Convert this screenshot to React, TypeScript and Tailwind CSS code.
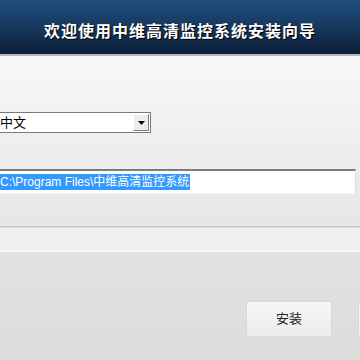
export default function App() {
  const cjk = { fontFamily: '"Liberation Sans", "Noto Sans CJK SC", sans-serif' }
  return (
    <div className="w-[360px] h-[360px] overflow-hidden flex flex-col bg-[#e4e4e4]" style={cjk}>
      {/* Header */}
      <div className="h-[54px] shrink-0 flex items-center justify-center bg-gradient-to-b from-[#1f4d7e] via-[#17385f] to-[#0b1f36]">
        <h1 className="text-[16px] font-bold text-white tracking-[1px] pt-[10px] [text-shadow:1px_1px_1px_#000]">
          欢迎使用中维高清监控系统安装向导
        </h1>
      </div>
      <div className="h-[2px] shrink-0 bg-[#b8bcc0]" />

      {/* Form area */}
      <div className="h-[170px] shrink-0 flex flex-col bg-gradient-to-b from-[#f8f8f8] to-[#e6e6e6]">
        <div className="mt-[56px] h-[21px] w-[151px] flex border border-[#7a7a7a] border-l-0 bg-white">
          <div className="flex-1 flex items-center text-[13px] text-black leading-none">中文</div>
          <div className="w-[16px] m-[1px] flex items-center justify-center bg-[#ececec] border border-[#fff] border-r-[#808080] border-b-[#808080]">
            <svg width="7" height="4" viewBox="0 0 7 4"><path d="M0 0h7L3.5 4z" fill="#000" /></svg>
          </div>
        </div>
        <div className="mt-[36px] h-[25px] w-[356px] flex items-center bg-white border-t-2 border-t-[#7c7c7c] border-r border-r-[#dcdcdc] border-b border-b-[#f4f4f4]">
          <span className="bg-[#3399ff] text-white text-[12px] leading-[16px] pr-[1px]">C:\Program Files\中维高清监控系统</span>
        </div>
      </div>

      {/* Separator band */}
      <div className="h-[1px] shrink-0 bg-[#c8c8c8]" />
      <div className="h-[1px] shrink-0 bg-[#dedede]" />
      <div className="h-[23px] shrink-0 bg-[#f0f0f0]" />
      <div className="h-[1px] shrink-0 bg-[#fafafa]" />

      {/* Footer */}
      <div className="flex-1 flex items-start justify-end gap-[26px] pt-[49px] bg-gradient-to-b from-[#e2e2e2] to-[#dcdcdc]">
        <button className="w-[86px] h-[36px] flex items-center justify-center rounded-[2px] bg-gradient-to-b from-[#f7f7f7] to-[#ececec] border border-[#d8d8d8] text-[13px] text-[#222]">
          安装
        </button>
        <div className="w-[10px] h-[36px] -mr-[8px] rounded-l-[2px] bg-[#f3f3f3] border border-[#d8d8d8]" />
      </div>
    </div>
  )
}
